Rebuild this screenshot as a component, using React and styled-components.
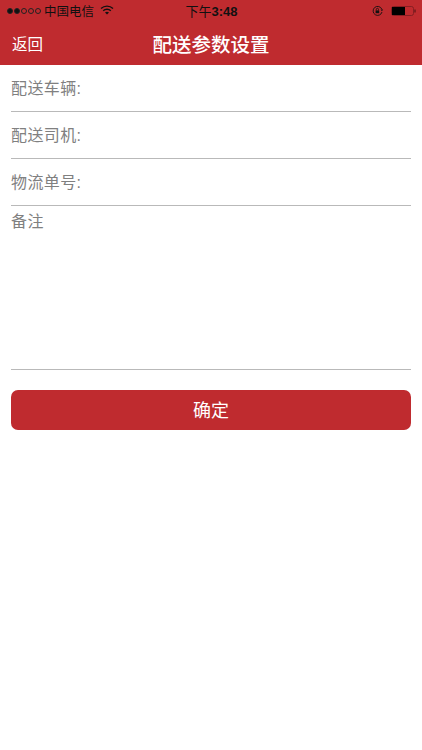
import React from 'react'
import styled, { createGlobalStyle } from 'styled-components'

const GlobalStyle = createGlobalStyle`
  html, body {
    margin: 0;
    padding: 0;
    background: #fff;
    font-family: "Liberation Sans", "Noto Sans CJK SC", sans-serif;
  }
`

const Page = styled.div`
  width: 422px;
  height: 750px;
  overflow: hidden;
  background: #fff;
`

const Header = styled.header`
  height: 65px;
  background: #bf2b2f;
  color: #fff;
`

const StatusBar = styled.div`
  height: 21px;
  display: grid;
  grid-template-columns: 1fr auto 1fr;
  align-items: center;
  padding: 0 6px 0 7px;
  color: #111;
`

const StatusLeft = styled.div`
  display: flex;
  align-items: center;
`

const Carrier = styled.span`
  margin-left: 2px;
  font-size: 12.5px;
`

const Clock = styled.span`
  font-size: 13px;
`

const ClockTime = styled.span`
  font-weight: 700;
`

const StatusRight = styled.div`
  display: flex;
  align-items: center;
  justify-content: flex-end;
  gap: 7px;
`

const Dot = styled.span`
  width: 6px;
  height: 6px;
  margin-right: 1px;
  box-sizing: border-box;
  border-radius: 50%;
  border: 0.7px solid #222;
  background: ${p => (p.$on ? '#111' : 'transparent')};
`

const WifiIcon = styled.svg`
  margin: 0 0 2px 6px;
`

const NavBar = styled.div`
  height: 44px;
  display: grid;
  grid-template-columns: 1fr auto 1fr;
  align-items: center;
  padding: 0 12px;
`

const BackLink = styled.span`
  font-size: 15.5px;
`

const Title = styled.h1`
  margin: 0;
  font-size: 19.5px;
  font-weight: 500;
`

const Form = styled.form`
  padding: 0 11px;
`

const Field = styled.div`
  height: 47px;
  box-sizing: border-box;
  padding-top: 14px;
  border-bottom: 1px solid #b9b9b9;
  color: #808080;
  font-size: 16px;
  letter-spacing: 0.4px;
  line-height: 20px;
`

const NoteField = styled(Field)`
  height: 164px;
  padding-top: 6px;
`

const Submit = styled.button`
  display: block;
  width: 100%;
  height: 40px;
  margin-top: 20px;
  padding: 0 0 2px;
  border: 0;
  border-radius: 7px;
  background: #bf2b2f;
  color: #fff;
  font-family: inherit;
  font-size: 18px;
`

const App = () => (
  <Page>
    <GlobalStyle />
    <Header>
      <StatusBar>
        <StatusLeft>
          <Dot $on />
          <Dot $on />
          <Dot />
          <Dot />
          <Dot />
          <Carrier>中国电信</Carrier>
          <WifiIcon width="14" height="10" viewBox="0 0 14 10">
            <path d="M1 3.6a8.6 8.6 0 0 1 12 0" fill="none" stroke="#111" strokeWidth="1.4" />
            <path d="M3.2 5.7a5.5 5.5 0 0 1 7.6 0" fill="none" stroke="#111" strokeWidth="1.4" />
            <path d="M7 9.6 5 7.6a2.9 2.9 0 0 1 4 0z" fill="#111" />
          </WifiIcon>
        </StatusLeft>
        <Clock>下午<ClockTime>3:48</ClockTime></Clock>
        <StatusRight>
          <svg width="12" height="12" viewBox="0 0 12 12">
            <path d="M9.8 4.2A4.5 4.5 0 1 0 10 7" fill="none" stroke="#111" strokeWidth="0.9" />
            <path d="M8.6 4.6h2.6L9.9 6.2z" fill="#111" />
            <rect x="3.6" y="5.4" width="3.6" height="2.8" fill="#111" />
            <path d="M4.3 5.4V4.4a1.1 1.1 0 0 1 2.2 0v1" fill="none" stroke="#111" strokeWidth="0.8" />
          </svg>
          <svg width="25" height="10" viewBox="0 0 25 10">
            <rect x="0.5" y="0.5" width="22" height="9" rx="2" fill="none" stroke="#7a1c20" strokeWidth="0.8" />
            <rect x="1" y="1" width="13" height="8" fill="#000" />
            <rect x="23.4" y="3.5" width="1.2" height="3" fill="#5c1518" />
          </svg>
        </StatusRight>
      </StatusBar>
      <NavBar>
        <BackLink>返回</BackLink>
        <Title>配送参数设置</Title>
      </NavBar>
    </Header>
    <Form>
      <Field>配送车辆:</Field>
      <Field>配送司机:</Field>
      <Field>物流单号:</Field>
      <NoteField>备注</NoteField>
      <Submit type="button">确定</Submit>
    </Form>
  </Page>
)

export default App
